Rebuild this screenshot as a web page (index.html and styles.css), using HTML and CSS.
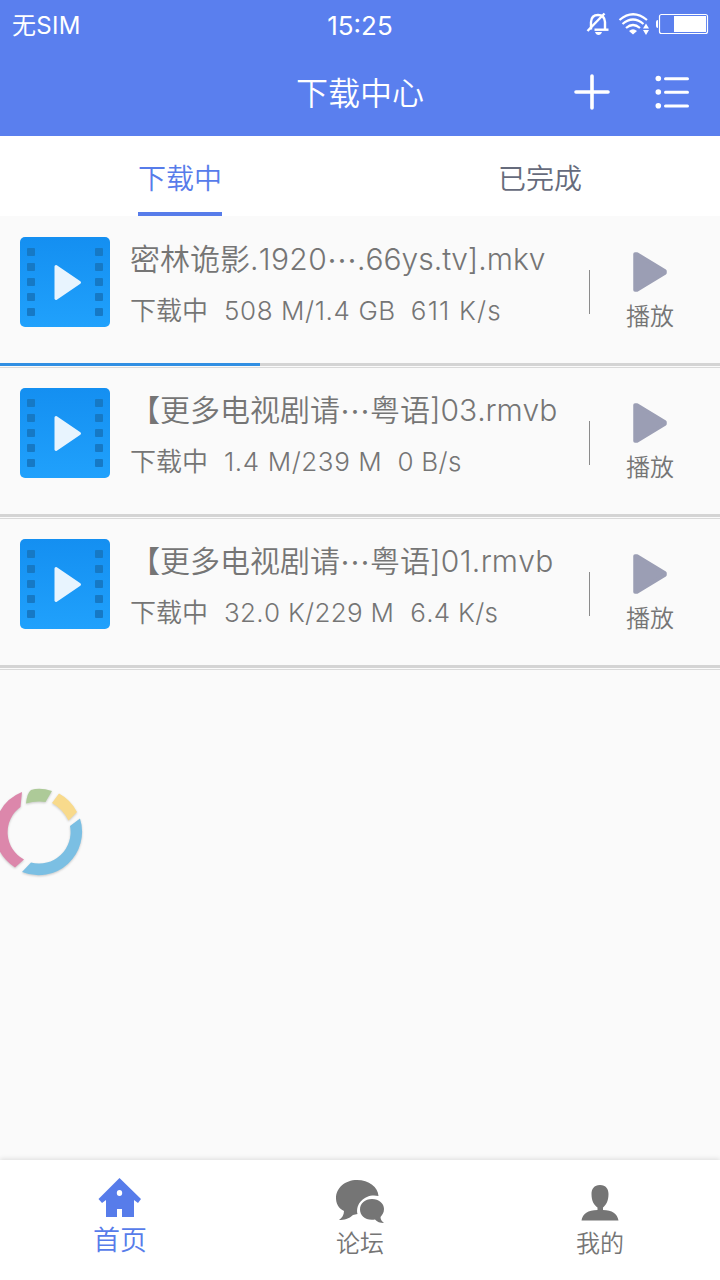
FILE: index.html
```html
<!DOCTYPE html>
<html lang="zh-CN">
<head>
<meta charset="utf-8">
<title>下载中心</title>
<link rel="stylesheet" href="styles.css">
</head>
<body>
<svg class="defs" width="0" height="0" aria-hidden="true">
  <symbol id="film" viewBox="0 0 90 90">
    <linearGradient id="film-bg" x1="0" y1="0" x2="0" y2="1"><stop offset="0" stop-color="#148ff1"/><stop offset="1" stop-color="#20a1fc"/></linearGradient>
    <rect width="90" height="90" rx="5" fill="url(#film-bg)"/>
    <g fill="#1679c5">
      <rect x="7" y="11" width="8" height="8" rx="1"/><rect x="7" y="26" width="8" height="8" rx="1"/><rect x="7" y="41" width="8" height="8" rx="1"/><rect x="7" y="56" width="8" height="8" rx="1"/><rect x="7" y="71" width="8" height="8" rx="1"/>
      <rect x="75" y="11" width="8" height="8" rx="1"/><rect x="75" y="26" width="8" height="8" rx="1"/><rect x="75" y="41" width="8" height="8" rx="1"/><rect x="75" y="56" width="8" height="8" rx="1"/><rect x="75" y="71" width="8" height="8" rx="1"/>
    </g>
    <path d="M36 29.500L59.500 45.500L36 61.500Z" fill="#e8f4fe" stroke="#e8f4fe" stroke-width="3" stroke-linejoin="round"/>
  </symbol>
  <symbol id="play" viewBox="0 0 34 40">
    <path d="M2 2H4L32 19V21L4 38H2Z" fill="#9b9eb4" stroke="#9b9eb4" stroke-width="3.500" stroke-linejoin="round"/>
  </symbol>
</svg>

<header class="header">
  <div class="status">
    <span class="carrier">无SIM</span>
    <span class="clock">15:25</span>
    <svg class="status-icons" width="124" height="24" viewBox="0 0 124 24">
      <g fill="none" stroke="#fff" stroke-width="2.400">
        <path d="M5 17.500V10Q5.500 3 12 3T19 10V17.500"/>
        <path d="M8.500 17.700H22.500"/>
        <path d="M1.500 19L18.500 1.500"/>
      </g>
      <path d="M9 20H16Q15 23 12.500 23T9 20Z" fill="#fff"/>
      <g fill="none" stroke="#fff" stroke-width="2.200">
        <path d="M33.500 8Q47 -3.500 61 8"/><path d="M36.500 12Q47 3 57.500 12"/><path d="M40 16Q47 10 54 16"/>
      </g>
      <path d="M43 19Q47 15.500 51 19L47 22.500Z" fill="#fff"/>
      <path d="M57 16.500L60 11.500L63 16.500ZM57 18H63L60 23Z" fill="#fff"/>
      <rect x="73.500" y="2.500" width="48" height="19" rx="2" fill="none" stroke="#fff" stroke-width="1.200"/>
      <rect x="88" y="4" width="32" height="16" fill="#fff"/>
      <path d="M72 8Q70 8 70 10V14Q70 16 72 16Z" fill="#fff"/>
    </svg>
  </div>
  <div class="titlebar">
    <h1 class="title">下载中心</h1>
    <div class="actions">
      <svg width="36" height="36" viewBox="0 0 36 36"><path d="M2 18H34M18 2V34" stroke="#fff" stroke-width="3.600" stroke-linecap="round"/></svg>
      <svg width="36" height="36" viewBox="0 0 36 36"><g fill="#fff"><circle cx="4.300" cy="4.500" r="2.800"/><circle cx="4.300" cy="18" r="2.800"/><circle cx="4.300" cy="31.700" r="2.800"/></g><path d="M11.500 4.700H33.500M11.500 18.200H33.500M11.500 31.900H33.500" stroke="#fff" stroke-width="3" stroke-linecap="round"/></svg>
    </div>
  </div>
</header>

<nav class="tabs">
  <div class="tab"><span class="tab-label active">下载中</span></div>
  <div class="tab"><span class="tab-label">已完成</span></div>
</nav>

<main class="list">
  <article class="item">
    <div class="item-body">
      <svg class="thumb"><use href="#film"/></svg>
      <div class="info">
        <div class="name"><span>密林诡影</span><span class="loose">.1920</span><span class="dots">…</span><span>.66ys.tv].mkv</span></div>
        <div class="meta"><span class="state">下载中</span><span class="size wide">508 M/1.4 GB</span><span class="speed wider">611 K/s</span></div>
      </div>
      <div class="play"><svg width="34" height="40"><use href="#play"/></svg><span>播放</span></div>
    </div>
    <div class="progress"><div class="progress-fill" style="width:260px"></div></div>
  </article>
  <article class="item">
    <div class="item-body">
      <svg class="thumb"><use href="#film"/></svg>
      <div class="info">
        <div class="name"><span>【更多电视剧请</span><span class="dots">…</span><span>粤语</span><span>]03.rmvb</span></div>
        <div class="meta"><span class="state">下载中</span><span class="size wide">1.4 M/239 M</span><span class="speed">0 B/s</span></div>
      </div>
      <div class="play"><svg width="34" height="40"><use href="#play"/></svg><span>播放</span></div>
    </div>
    <div class="progress"></div>
  </article>
  <article class="item">
    <div class="item-body">
      <svg class="thumb"><use href="#film"/></svg>
      <div class="info">
        <div class="name"><span>【更多电视剧请</span><span class="dots">…</span><span>粤语</span><span class="loose">]01.rmvb</span></div>
        <div class="meta"><span class="state">下载中</span><span class="size">32.0 K/229 M</span><span class="speed">6.4 K/s</span></div>
      </div>
      <div class="play"><svg width="34" height="40"><use href="#play"/></svg><span>播放</span></div>
    </div>
    <div class="progress"></div>
  </article>
</main>

<svg class="floating" width="90" height="100" viewBox="0 780 90 100">
  <path d="M22 792A44 44 0 0 0 -1 813V850A44 44 0 0 0 15 867.500L24 859.500A31 31 0 0 1 20.500 807Z" fill="#dc87ab"/>
  <path d="M26 803.500Q27 793 31 790Q40 787 52 791L45.500 802Q36 800.500 26 803.500Z" fill="#adca98"/>
  <path d="M59 793.500Q71 800 77 812L68.500 820.500Q63 809 52 803Z" fill="#f8da8c"/>
  <path d="M80 818.500A43.500 43.500 0 0 1 22 872L31 862.500A31.500 31.500 0 0 0 70 826Z" fill="#7bbfe3"/>
</svg>

<footer class="bottom-nav">
  <div class="nav-item active">
    <svg width="44" height="40" viewBox="0 0 44 40"><path fill-rule="evenodd" d="M21.500 0L43 21L40 25L36 22V39H24V31H19V39H8V22L4 25L.5 21ZM21.500 12A2.700 3 0 1 0 21.500 18A2.700 3 0 1 0 21.500 12Z" fill="#577cea"/></svg>
    <span>首页</span>
  </div>
  <div class="nav-item">
    <svg width="50" height="44" viewBox="0 0 50 44" fill="#757575"><path d="M22 0C34 0 43 7 43.500 16C32 13 20 22 22.500 34L18 35C14 39 9 40 4 40C7 38 9 35 9 31C3 28 1 23 1 18C1 8 10 0 22 0Z"/><path d="M37 19C44 19 49 23.500 49 29C49 33 47 35 45.500 37C45.500 40 47 41 49 43C45 43 42 42 40 39.500C31 41 25 36 25 29.500C25 23.500 30 19 37 19Z"/></svg>
    <span>论坛</span>
  </div>
  <div class="nav-item">
    <svg width="38" height="36" viewBox="0 0 38 36"><path d="M19 0C25 0 27.500 4 27.500 9C27.500 16 25 20 22 22.500V25C31 25 36.500 29 37.500 35.500H.5C1.500 29 7 25 16.500 25V22.500C13 20 10.500 16 10.500 9C10.500 4 13 0 19 0Z" fill="#757575"/></svg>
    <span>我的</span>
  </div>
</footer>
</body>
</html>
```

FILE: styles.css
```css
* { box-sizing: border-box; }
body {
  margin: 0;
  width: 720px;
  height: 1280px;
  display: flex;
  flex-direction: column;
  overflow: hidden;
  background: #fafafa;
  color: #757575;
  font-family: Inter, "Noto Sans CJK SC", sans-serif;
  font-weight: 350;
}
svg { display: block; flex: none; }
.defs { position: absolute; }
.header { height: 136px; background: #5a7fee; color: #fff; }
.status {
  height: 48px;
  display: grid;
  grid-template-columns: 1fr auto 1fr;
  align-items: center;
  padding: 2px 12px 0;
  font-size: 25px;
  font-weight: 400;
}
.clock { font-size: 26px; }
.carrier { font-size: 24px; letter-spacing: .3px; margin-top: -3px; }
.status-icons { justify-self: end; margin-right: -2px; margin-top: -2px; }
.titlebar {
  height: 88px;
  display: grid;
  grid-template-columns: 1fr auto 1fr;
  align-items: center;
}
.title { grid-column: 2; margin: 4px 0 0; font-size: 32px; line-height: 48px; font-weight: 350; }
.actions { display: flex; justify-content: flex-end; gap: 44px; padding-right: 30px; }
.tabs { height: 80px; display: flex; background: #fff; font-size: 28px; color: #666b7c; }
.tab { flex: 1; display: flex; justify-content: center; }
.tab-label { height: 80px; line-height: 86px; }
.tab-label.active { color: #577cea; border-bottom: 4px solid #577cea; }
.list { flex: 1; }
.item { height: 151px; }
.item + .item, .item:last-child { border-top: 1px solid #d9d9d9; }
.item:last-child { height: 152px; border-bottom: 1px solid #d9d9d9; }
.item-body { height: 147px; padding: 21px 0 0 20px; display: flex; }
.item + .item .item-body { height: 146px; padding-top: 20px; }
.thumb { width: 90px; height: 90px; }
.info { width: 460px; padding-left: 20px; white-space: nowrap; font-kerning: none; }
.name { height: 45px; line-height: 45px; font-size: 30px; display: flex; }
.dots { font-family: "Noto Sans CJK SC", sans-serif; }
.loose { letter-spacing: .35px; }
.meta { height: 40px; line-height: 40px; margin-top: 9px; font-size: 26px; display: flex; }
.state { width: 94px; }
.size { white-space: pre; margin-right: 16px; }
.size, .speed { letter-spacing: .3px; }
.size.wide { letter-spacing: .6px; margin-right: 15px; }
.speed.wider { letter-spacing: 1.2px; }
.play { flex: 1; height: 92px; display: flex; flex-direction: column; align-items: center; padding: 15px 0 0 10px; position: relative; font-size: 24px; }
.play::before { content: ""; position: absolute; left: 19px; top: 33px; width: 1px; height: 44px; background: #8b8b8b; }
.play span { line-height: 36px; margin-top: 7px; }
.progress { height: 3px; background: #d4d4d4; }
.progress-fill { height: 3px; background: #318fe3; }
.floating { position: absolute; left: 0; top: 780px; filter: drop-shadow(0 1px 1px rgba(0,0,0,.2)); }
.bottom-nav { height: 120px; display: flex; background: #fff; box-shadow: 0 -1px 5px rgba(0,0,0,.12); }
.nav-item { flex: 1; display: flex; flex-direction: column; align-items: center; justify-content: flex-end; padding-bottom: 18px; font-size: 24px; }
.nav-item span { line-height: 36px; margin-top: 2px; }
.nav-item:last-child span { margin-top: 5px; }
.nav-item.active { color: #577cea; font-size: 27px; padding-bottom: 19px; }
.nav-item.active span { line-height: 40px; margin-top: 3px; }
```
